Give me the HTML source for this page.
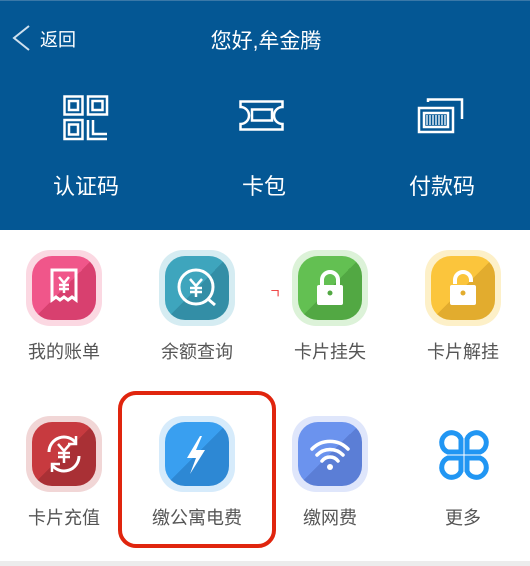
<!DOCTYPE html>
<html><head><meta charset="utf-8"><style>
*{margin:0;padding:0;box-sizing:border-box}
body{width:530px;height:566px;background:#fff;position:relative;overflow:hidden;font-family:"Liberation Sans","Noto Sans CJK SC",sans-serif}
.hd{position:absolute;left:0;top:0;width:530px;height:230px;background:#045794;border-top:1px solid #3a78a8}
.t{position:absolute;color:#fff;white-space:nowrap;transform:translateX(-50%)}
.ic{position:absolute;width:76px;height:76px;border-radius:24px;transform:translate(-50%,-50%)}
.ic .in{position:absolute;left:6px;top:6px;width:64px;height:64px;border-radius:20px;overflow:hidden}
.ic svg{position:absolute;left:0;top:0}
.lb{position:absolute;color:#555;font-size:18px;white-space:nowrap;transform:translateX(-50%)}
</style></head><body>
<div class="hd">
<svg style="position:absolute;left:10px;top:24px" width="22" height="26"><path d="M19 1 L4 13 L19 25" stroke="#cfe0ee" stroke-width="2" fill="none"/></svg>
<div style="position:absolute;left:40px;top:25px;color:#fff;font-size:18px">返回</div>
<div class="t" style="left:266px;top:24px;font-size:21px">您好,牟金腾</div>
<svg style="position:absolute;left:63px;top:94px" width="46" height="46" fill="none" stroke="#fff" stroke-width="2.5"><rect x="1.5" y="1.5" width="18" height="18"/><rect x="6" y="6" width="9" height="9"/><rect x="25" y="1.5" width="19" height="18"/><rect x="29.5" y="6" width="10" height="9"/><rect x="1.5" y="25" width="18" height="19"/><rect x="6" y="29.5" width="9" height="10"/><path d="M25 25v19h19M30 25v14h14"/></svg>
<div class="t" style="left:86px;top:168px;font-size:22px">认证码</div>
<svg style="position:absolute;left:239px;top:99px" width="46" height="32" fill="none" stroke="#fff" stroke-width="2.5"><path d="M1.5 1.5h42v5.5a6.5 6.5 0 0 0 0 17v5.5h-42v-5.5a6.5 6.5 0 0 0 0-17z"/><rect x="13" y="9.5" width="20" height="11"/></svg>
<div class="t" style="left:264px;top:168px;font-size:22px">卡包</div>
<svg style="position:absolute;left:417px;top:97px" width="48" height="40" fill="none" stroke="#fff" stroke-width="2.5"><path d="M11 4V1.5h34V21"/><rect x="2" y="10" width="34" height="24"/><rect x="7" y="15" width="24" height="14"/><path d="M10 17v10M13 17v10M16 17v10M19 17v10M22 17v10M25 17v10M28 17v10" stroke-width="1.3"/></svg>
<div class="t" style="left:442px;top:168px;font-size:22px">付款码</div>
</div>

<!-- row 1 -->
<div class="ic" style="left:64px;top:288px;background:#fbd8e2"><div class="in" style="background:linear-gradient(135deg,#f0568a 50%,#d8406f 50%)"><svg width="64" height="64" fill="none" stroke="#fff" stroke-width="3"><path d="M20 14h24v30l-4-3-4 3-4-3-4 3-4-3-4 3z"/><path d="M27 21l5 6 5-6M32 27v10M27 29h10M27 33h10" stroke-width="2.5"/></svg></div></div>
<div class="lb" style="left:64px;top:338px">我的账单</div>
<div class="ic" style="left:197px;top:288px;background:#d5ecf2"><div class="in" style="background:linear-gradient(135deg,#3ea5bd 50%,#338ea6 50%)"><svg width="64" height="64" fill="none" stroke="#fff" stroke-width="3"><circle cx="31" cy="31" r="17"/><path d="M43 43l7 6"/><path d="M25 23l6 7 6-7M31 30v11M25 32h12M25 36h12" stroke-width="2.5"/></svg></div></div>
<div class="lb" style="left:197px;top:338px">余额查询</div>
<div class="ic" style="left:330px;top:288px;background:#dcf2d8"><div class="in" style="background:linear-gradient(135deg,#63c052 50%,#52a843 50%)"><svg width="64" height="64"><path d="M24 30v-6a8 8 0 0 1 16 0v6" fill="none" stroke="#fff" stroke-width="4"/><rect x="19" y="29" width="26" height="20" rx="2" fill="#fff"/><circle cx="32" cy="37" r="2.5" fill="#52a843"/></svg></div></div>
<div class="lb" style="left:330px;top:338px">卡片挂失</div>
<div class="ic" style="left:463px;top:288px;background:#fdf0c8"><div class="in" style="background:linear-gradient(135deg,#fbc53c 50%,#e2ac2e 50%)"><svg width="64" height="64"><path d="M24 28v-4a8 8 0 0 1 16 0v2" fill="none" stroke="#fff" stroke-width="4"/><rect x="19" y="29" width="26" height="20" rx="2" fill="#fff"/><circle cx="32" cy="37" r="2.5" fill="#e2ac2e"/></svg></div></div>
<div class="lb" style="left:463px;top:338px">卡片解挂</div>
<div style="position:absolute;left:269px;top:283px;color:#e33;font-size:13px">ㄱ</div>

<!-- row 2 -->
<div class="ic" style="left:64px;top:454px;background:#f1d6d6"><div class="in" style="background:linear-gradient(135deg,#c73a3f 50%,#a93035 50%)"><svg width="64" height="64" fill="none" stroke="#fff" stroke-width="3"><path d="M17 30a15 15 0 0 1 27-9M47 34a15 15 0 0 1-27 9"/><path d="M44 14v8h-8M20 50v-8h8" stroke-width="2.5"/><path d="M26 22l6 7 6-7M32 29v12M26 31h12M26 35h12" stroke-width="2.5"/></svg></div></div>
<div class="lb" style="left:64px;top:504px">卡片充值</div>
<div class="ic" style="left:197px;top:454px;background:#d6ebfb"><div class="in" style="background:linear-gradient(135deg,#399ff0 50%,#2d88d4 50%)"><svg width="64" height="64"><path d="M35 14L22 36h9l-6 16 15-24h-9l6-14z" fill="#fff"/></svg></div></div>
<div class="lb" style="left:197px;top:504px">缴公寓电费</div>
<div class="ic" style="left:330px;top:454px;background:#dfe6fb"><div class="in" style="background:linear-gradient(135deg,#6b93ee 50%,#5b7ed6 50%)"><svg width="64" height="64" fill="none" stroke="#fff" stroke-width="3.5" stroke-linecap="round"><path d="M14 27a25 25 0 0 1 36 0M19 33a18 18 0 0 1 26 0M24 39a10 10 0 0 1 16 0"/><circle cx="32" cy="45" r="3" fill="#fff" stroke="none"/></svg></div></div>
<div class="lb" style="left:330px;top:504px">缴网费</div>
<svg style="position:absolute;left:435px;top:426px" width="58" height="58" fill="none" stroke="#2196f3" stroke-width="5"><path d="M26 26H13a10 10 0 1 1 13-13zM32 26h13a10 10 0 1 0-13-13zM26 32H13a10 10 0 1 0 13 13zM32 32h13a10 10 0 1 1-13 13z"/></svg>
<div class="lb" style="left:463px;top:504px">更多</div>

<div style="position:absolute;left:118px;top:391px;width:158px;height:157px;border:4px solid #e0250e;border-radius:18px"></div>
<div style="position:absolute;left:0;top:561px;width:530px;height:5px;background:#ececec"></div>
</body></html>
